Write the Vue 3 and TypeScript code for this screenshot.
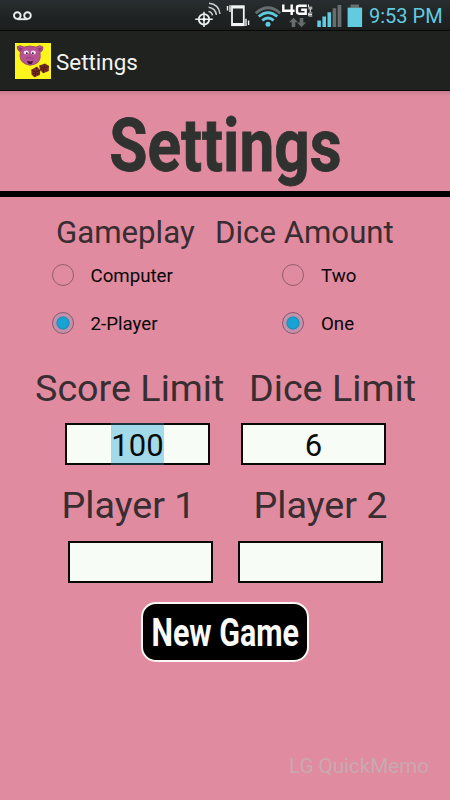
<script setup lang="ts">
import { ref } from 'vue'

interface Choice {
  title: string
  name: string
  options: string[]
}

const groups: Choice[] = [
  { title: 'Gameplay', name: 'gameplay', options: ['Computer', '2-Player'] },
  { title: 'Dice Amount', name: 'dice', options: ['Two', 'One'] },
]
const selected = ref<Record<string, string>>({ gameplay: '2-Player', dice: 'One' })
const scoreLimit = ref('100')
const diceLimit = ref('6')
</script>

<template>
  <div class="screen">
    <header class="status">
      <svg class="status-icons" width="450" height="30" viewBox="0 0 450 30">
        <g fill="none" stroke="#e9eeee" stroke-width="1.9">
          <circle cx="17.3" cy="15.6" r="3.3" />
          <circle cx="27.5" cy="15.6" r="3.3" />
          <path d="M17.3 19.2H27.5" />
        </g>
        <g fill="none" stroke="#e9eeee">
          <circle cx="204" cy="19.3" r="5.2" stroke-width="1.9" />
          <path d="M204 11.8V27M195.3 19.3H212.7" stroke-width="1.5" />
          <path d="M208.5 11.5Q212 12 212.4 15.4M208.6 7.3Q215.5 8.2 216.4 15M209 3.2Q218.8 4 220 14" stroke="#c9cfcf" stroke-width="1.5" />
        </g>
        <circle cx="204" cy="19.3" r="1.6" fill="#fff" />
        <g fill="none" stroke="#f1f4f4">
          <rect x="232" y="6.2" width="11.8" height="19" stroke-width="1.8" />
          <path d="M232 7.2H243.8M232 24.2H243.8" stroke-width="2.6" />
          <path d="M230 5.2V12M227.5 6V10.5M246 18.8V26M248.6 20.5V25" stroke-width="1.4" />
        </g>
        <g fill="none" stroke-width="2.8">
          <path d="M255.8 13.2Q268 2.2 280.2 13.2" stroke="#676e70" />
          <path d="M258.7 16.5Q268 8.7 277.3 16.5" stroke="#5fc9df" />
          <path d="M262.3 20.4Q268 15.6 273.7 20.4" stroke="#5fc9df" />
        </g>
        <circle cx="268" cy="24.2" r="2.5" fill="#5fc9df" />
        <g fill="none" stroke="#fff" stroke-width="2.4">
          <path d="M283.3 4.5V10.8H294.6M291.7 4.5V15" />
          <path d="M306.8 5.7H299.2Q297 5.7 297 7.7V11.6Q297 13.7 299.2 13.7H305.7V9.8H301.2" />
        </g>
        <path d="M308.5 4.5V7.2H312.3M308.3 8.8H312.3M310.3 9V12M312.3 13H308.7V16H312.3M308.7 14.5H312" fill="none" stroke="#e6eaea" />
        <path d="M293.5 17.8L298 22.3H295.3V27H291.7V22.3H289Z" fill="#676b6c" />
        <path d="M301.5 27.2L306 22.6H303.3V18H299.7V22.6H297Z" fill="#676b6c" />
        <path d="M317.3 20.5h3.6V27h-3.6zM322.4 16.4h3.6V27h-3.6zM327.5 12.2h3.6V27h-3.6z" fill="#63cbe0" />
        <path d="M332.6 8.3h3.6V27h-3.6zM337.6 5h3.8V27h-3.8z" fill="#686d6d" />
        <path d="M350.5 4.5h8.5v3h3V10h-14V7.5h2.5z" fill="#686d6d" />
        <rect x="347.6" y="7.8" width="14.5" height="19.2" fill="#63cbe0" />
      </svg>
      <span class="clock">9:53 PM</span>
    </header>

    <nav class="action-bar">
      <svg width="36" height="36" viewBox="0 0 36 36">
        <rect width="36" height="36" fill="#fdf51c" />
        <path d="M2.2 3.5Q5 1.8 9 4Q15 2 21 4Q25 1.3 28 4Q28.4 8 25 9.5Q26.7 19 19.5 21.3Q15 23.5 10.5 21Q3.5 18 5.4 9.2Q1.8 7 2.2 3.5Z" fill="#b65494" stroke="#8e3c70" stroke-width=".7" />
        <path d="M3 4.2L8 5.5L5.5 8.5ZM27.2 4.5L22 5.7L25 8.5Z" fill="#8d376f" />
        <ellipse cx="11.3" cy="9.5" rx="2.5" ry="2" fill="#f7e9f4" />
        <ellipse cx="18.3" cy="9.5" rx="2.5" ry="2" fill="#f7e9f4" />
        <circle cx="11.8" cy="10.3" r="1" fill="#3d2338" />
        <circle cx="17.8" cy="10.3" r="1" fill="#3d2338" />
        <path d="M11 15.5Q15 13 18.5 15.5" fill="none" stroke="#95427a" />
        <path d="M12 17.8Q15 19 18 17.8Q17.5 21.3 15 21.3Q12.6 21 12 17.8Z" fill="#42152e" />
        <path d="M16.3 26.8L22 23.5L25.3 27.5L24.8 32L19.3 34.3L16.5 31.5Z" fill="#762b26" />
        <path d="M24.3 22.5L30 20.5L34 23L33.8 28L28.3 30.2L24.8 27Z" fill="#762b26" />
        <path d="M16.5 27L20.8 29L25 27.5M20.8 29L19.8 34M24.5 23L28.5 25L33.8 23.3M28.5 25L28.3 30" fill="none" stroke="#46130f" stroke-width=".8" />
        <path d="M18.5 30v1M22.7 30.2v1M26.3 26v1M31 26v1M21 26h1M29 22.8h1" stroke="#38110b" stroke-width="1.2" />
      </svg>
      <span class="bar-title">Settings</span>
    </nav>

    <main>
      <h1><span>Settings</span></h1>

      <section class="choices">
        <fieldset v-for="group in groups" :key="group.name" :class="group.name">
          <legend>{{ group.title }}</legend>
          <label v-for="option in group.options" :key="option">
            <input v-model="selected[group.name]" type="radio" :name="group.name" :value="option" />
            <span>{{ option }}</span>
          </label>
        </fieldset>
      </section>

      <section class="labels limits">
        <span class="first">Score Limit</span><span class="second">Dice Limit</span>
      </section>
      <section class="fields limit-fields">
        <div class="box"><span class="selection">{{ scoreLimit }}</span></div>
        <div class="box"><span>{{ diceLimit }}</span></div>
      </section>

      <section class="labels players">
        <span class="first">Player 1</span><span class="second">Player 2</span>
      </section>
      <section class="fields player-fields">
        <div class="box"></div>
        <div class="box"></div>
      </section>

      <button type="button"><span>New Game</span></button>
      <footer>LG QuickMemo</footer>
    </main>
  </div>
</template>

<style>
body {
  margin: 0;
}
</style>

<style scoped>
* {
  box-sizing: border-box;
}
.screen {
  width: 450px;
  height: 800px;
  overflow: hidden;
  display: flex;
  flex-direction: column;
  background: #e08ba0;
  font-family: Roboto, sans-serif;
  white-space: nowrap;
}
.status {
  display: grid;
  height: 31px;
  flex: none;
  background: linear-gradient(#282d2f, #202425 50%, #1c1e1e);
  border-bottom: 1px solid #070908;
}
.status-icons,
.clock {
  grid-area: 1 / 1;
}
.clock {
  justify-self: start;
  margin-left: 369px;
  font-size: 20px;
  line-height: 33px;
  color: #62cbe1;
}
.action-bar {
  display: flex;
  align-items: center;
  gap: 5px;
  height: 60px;
  flex: none;
  padding: 1px 0 0 15px;
  background: #20221f;
  border-bottom: 1px solid #080706;
}
.bar-title {
  font-size: 22.4px;
  line-height: 30px;
  color: #f2f4f1;
  padding-top: 2px;
}
main {
  flex: 1;
  display: flex;
  flex-direction: column;
  background: linear-gradient(#cb7e91, #de8a9f 5px, #e08ba0 10px);
}
h1 {
  margin: 0;
  height: 106px;
  border-bottom: 6px solid #000;
  display: flex;
  justify-content: center;
  font-size: 74px;
  line-height: 109px;
  font-weight: 700;
  color: #30322f;
}
h1 span {
  transform: scaleX(0.84);
  -webkit-text-stroke: 0.8px #30322f;
}
.choices {
  display: flex;
  height: 158px;
  padding: 15px 0 0 52px;
}
fieldset {
  width: 231px;
  border: 0;
  margin: 0;
  padding: 0;
  min-width: 0;
}
.gameplay {
  width: 163px;
}
.dice {
  padding-left: 67px;
}
legend {
  padding: 0;
  margin-left: 4px;
  font-size: 31.2px;
  line-height: 41px;
  height: 39px;
  color: #382d30;
}
.dice legend {
  margin-left: -67px;
}
label {
  display: flex;
  align-items: center;
  gap: 17px;
  height: 48px;
  font-size: 18.7px;
  color: #090607;
}
.gameplay label {
  margin-left: -0.5px;
}
label span {
  padding-top: 1px;
}
input {
  appearance: none;
  width: 22px;
  height: 22px;
  margin: 0;
  border: 1px solid #965d70;
  border-radius: 50%;
}
input:checked {
  background: radial-gradient(circle, #18a3d5 0 4.5px, #238bb5 6.2px, #c092ab 7px 9px, #ca8ea4 10px);
  border-color: #8b5a6f;
}
.labels {
  display: flex;
  font-size: 37.7px;
  line-height: 46px;
  height: 46px;
  color: #382d30;
}
.limits {
  margin-top: 10px;
  padding-left: 35px;
}
.limits .first {
  width: 214px;
}
.players {
  margin-top: 17px;
  padding-left: 61.5px;
}
.players .first {
  width: 192px;
}
.fields {
  display: flex;
  height: 42px;
}
.limit-fields {
  margin-top: 12px;
  padding-left: 65px;
  gap: 31px;
}
.player-fields {
  margin-top: 13px;
  padding-left: 68px;
  gap: 25px;
}
.box {
  width: 145px;
  height: 42px;
  border: 2px solid #080a08;
  background: #f8fcf6;
  display: flex;
  justify-content: center;
  font-size: 31px;
  line-height: 42px;
  color: #080a0a;
}
.selection {
  height: 42px;
  margin-top: -2px;
  line-height: 46px;
  background: linear-gradient(#17343d 2px, #a3daea 2px 40px, #17343d 40px);
}
button {
  align-self: center;
  width: 168px;
  height: 60px;
  margin-top: 19px;
  padding: 0;
  border: 2.5px solid #fbf5f4;
  border-radius: 15px;
  background: #000;
  color: #fafbf9;
  font: 700 38px / 58px Roboto, sans-serif;
  display: flex;
  justify-content: center;
}
button span {
  transform: scaleX(0.8);
}
footer {
  align-self: flex-end;
  margin: 90px 21px 0 0;
  font-size: 20.6px;
  line-height: 28px;
  color: #c9a9b1;
}
</style>
